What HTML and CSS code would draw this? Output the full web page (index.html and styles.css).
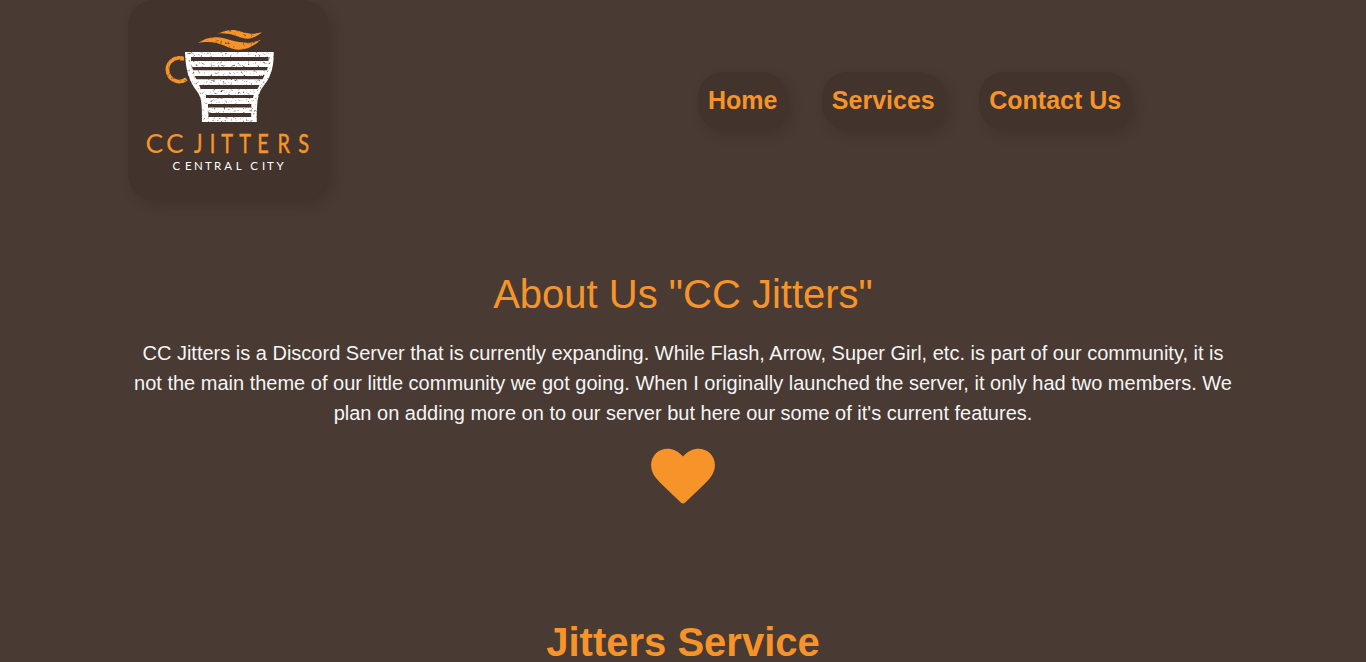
FILE: index.html
```html
<!DOCTYPE html>
<html lang="en">
<head>
<meta charset="utf-8">
<title>CC Jitters</title>
<link rel="stylesheet" href="styles.css">
</head>
<body>
<header class="header">
  <a class="logo" href="#">
    <svg class="logo-art" viewBox="0 0 200 200" role="img" aria-label="CC Jitters Central City">
      <defs>
        <filter id="worn" filterUnits="userSpaceOnUse" x="0" y="0" width="200" height="200" color-interpolation-filters="sRGB">
          <feTurbulence type="fractalNoise" baseFrequency="0.4" numOctaves="3" seed="8" result="noise"/>
          <feColorMatrix in="noise" type="matrix" values="0 0 0 0 0  0 0 0 0 0  0 0 0 0 0  3 0 0 0 -1.75" result="specks"/>
          <feComposite in="SourceGraphic" in2="specks" operator="out"/>
        </filter>
      </defs>
      <g filter="url(#worn)">
        <path class="orange" d="M70 43C77 38 86 35.500 97 38.500C111 42.500 120 45 133.500 39.500C126 46 119 50 110 49.800C98 49 91 39 70 43Z"/>
        <path class="orange" d="M90 34C97 30 105 28.500 113 31.500C120 34 127 34.500 134.500 32C129 36 124 39.500 117 38.500C108 37 103 32 90 34Z"/>
        <path class="handle" d="M54 60.500V58.200A11.800 11.800 0 1 0 58.500 79"/>
        <path class="white" fill-rule="evenodd" d="M57 52H145.700C146 65 143.500 76 137 84C130 93 128.800 98 128.800 122H74C74 103 74 98 68 90C61 81 57.500 70 57 52Z
          M63 57V61H140.500V57Z M64 67L65 70.200H139L139.800 67Z M66.500 76L68.500 79.200H134.500L136.200 76Z M71 85L73 89H129.500L131.500 85Z M78 95V98H125L125.700 95Z M80 104V107.500H123.300V104Z M80.500 113V117H123.200V113Z"/>
      </g>
      <text class="brand" x="17.600 38" y="153">CC</text>
      <text class="brand brand-narrow" transform="scale(.75 1)" x="88 109 124.500 148.500 172.500 199.500 227" y="153">JITTERS</text>
      <text class="place" x="44.500 57 66 77 86 96.300 107.700 116 122.200 134 139 148.500" y="170">CENTRAL CITY</text>
    </svg>
  </a>
  <nav class="nav">
    <a class="nav-link" href="#">Home</a>
    <a class="nav-link" href="#">Services</a>
    <a class="nav-link" href="#">Contact Us</a>
  </nav>
</header>
<main>
  <section class="about">
    <h1 class="about-title">About Us "CC Jitters"</h1>
    <p class="about-text">CC Jitters is a Discord Server that is currently expanding. While Flash, Arrow, Super Girl, etc. is part of our community, it is not the main theme of our little community we got going. When I originally launched the server, it only had two members. We plan on adding more on to our server but here our some of it's current features.</p>
    <svg class="heart" viewBox="0 0 64 56" aria-hidden="true">
      <path d="M32 8.600C24.500-.800 12-1.800 5 5.200C-1.800 12-1.300 22.500 5 30C7 32.600 9 34.400 11 36.400L29.800 54.600Q32 56.500 34.200 54.600L53 36.400C55 34.400 57 32.600 59 30C65.300 22.500 65.800 12 59 5.200C52-1.800 39.500-.800 32 8.600Z"/>
    </svg>
  </section>
  <section class="services">
    <h2 class="services-title">Jitters Service</h2>
  </section>
</main>
</body>
</html>
```
FILE: styles.css
```css
* {
  box-sizing: border-box;
}

html {
  overflow: hidden;
}

body {
  margin: 0;
  height: 662px;
  overflow: hidden;
  background: #493a33;
  color: #f5f5f5;
  font-family: "Liberation Sans", Arial, sans-serif;
}

.header {
  display: flex;
  justify-content: space-between;
  width: 1110px;
  height: 200px;
  margin-left: 128px;
}

.logo {
  width: 200px;
  height: 200px;
  border-radius: 25px;
  background: #42332c;
  box-shadow: 5px 5px 10px #42332c;
}

.logo-art {
  display: block;
  width: 200px;
  height: 200px;
}

.orange {
  fill: #f79429;
}

.white {
  fill: #fff;
}

.handle {
  fill: none;
  stroke: #f79429;
  stroke-width: 3.8;
}

.brand {
  fill: #f79429;
  font: 400 26.500px Lato, sans-serif;
}

.brand-narrow {
  stroke: #f79429;
  stroke-width: .5;
}

.place {
  fill: #fff;
  font: 400 11.500px Lato, sans-serif;
}

.nav {
  display: flex;
  align-items: flex-start;
  gap: 34.500px;
  padding: 72px 106.800px 0 0;
}

.nav-link {
  height: 58px;
  padding: 0 10px;
  border-radius: 25px;
  background: #42332c;
  box-shadow: 5px 5px 10px #42332c;
  color: #f79429;
  font-size: 25px;
  font-weight: 700;
  line-height: 57px;
  text-decoration: none;
}

.about {
  display: flex;
  flex-direction: column;
  align-items: center;
  width: 1110px;
  margin: 70px auto 0;
  text-align: center;
}

.about-title {
  margin: 0;
  color: #f79429;
  font-size: 40px;
  font-weight: 400;
  line-height: 48px;
}

.about-text {
  margin: 20px 0;
  font-size: 20px;
  line-height: 30px;
  text-rendering: optimizeSpeed;
  font-kerning: normal;
}

.heart {
  width: 64px;
  height: 56px;
  fill: #f79429;
}

.services {
  margin-top: 114px;
  text-align: center;
}

.services-title {
  margin: 0;
  color: #f79429;
  font-size: 40px;
  line-height: 48px;
}
```
